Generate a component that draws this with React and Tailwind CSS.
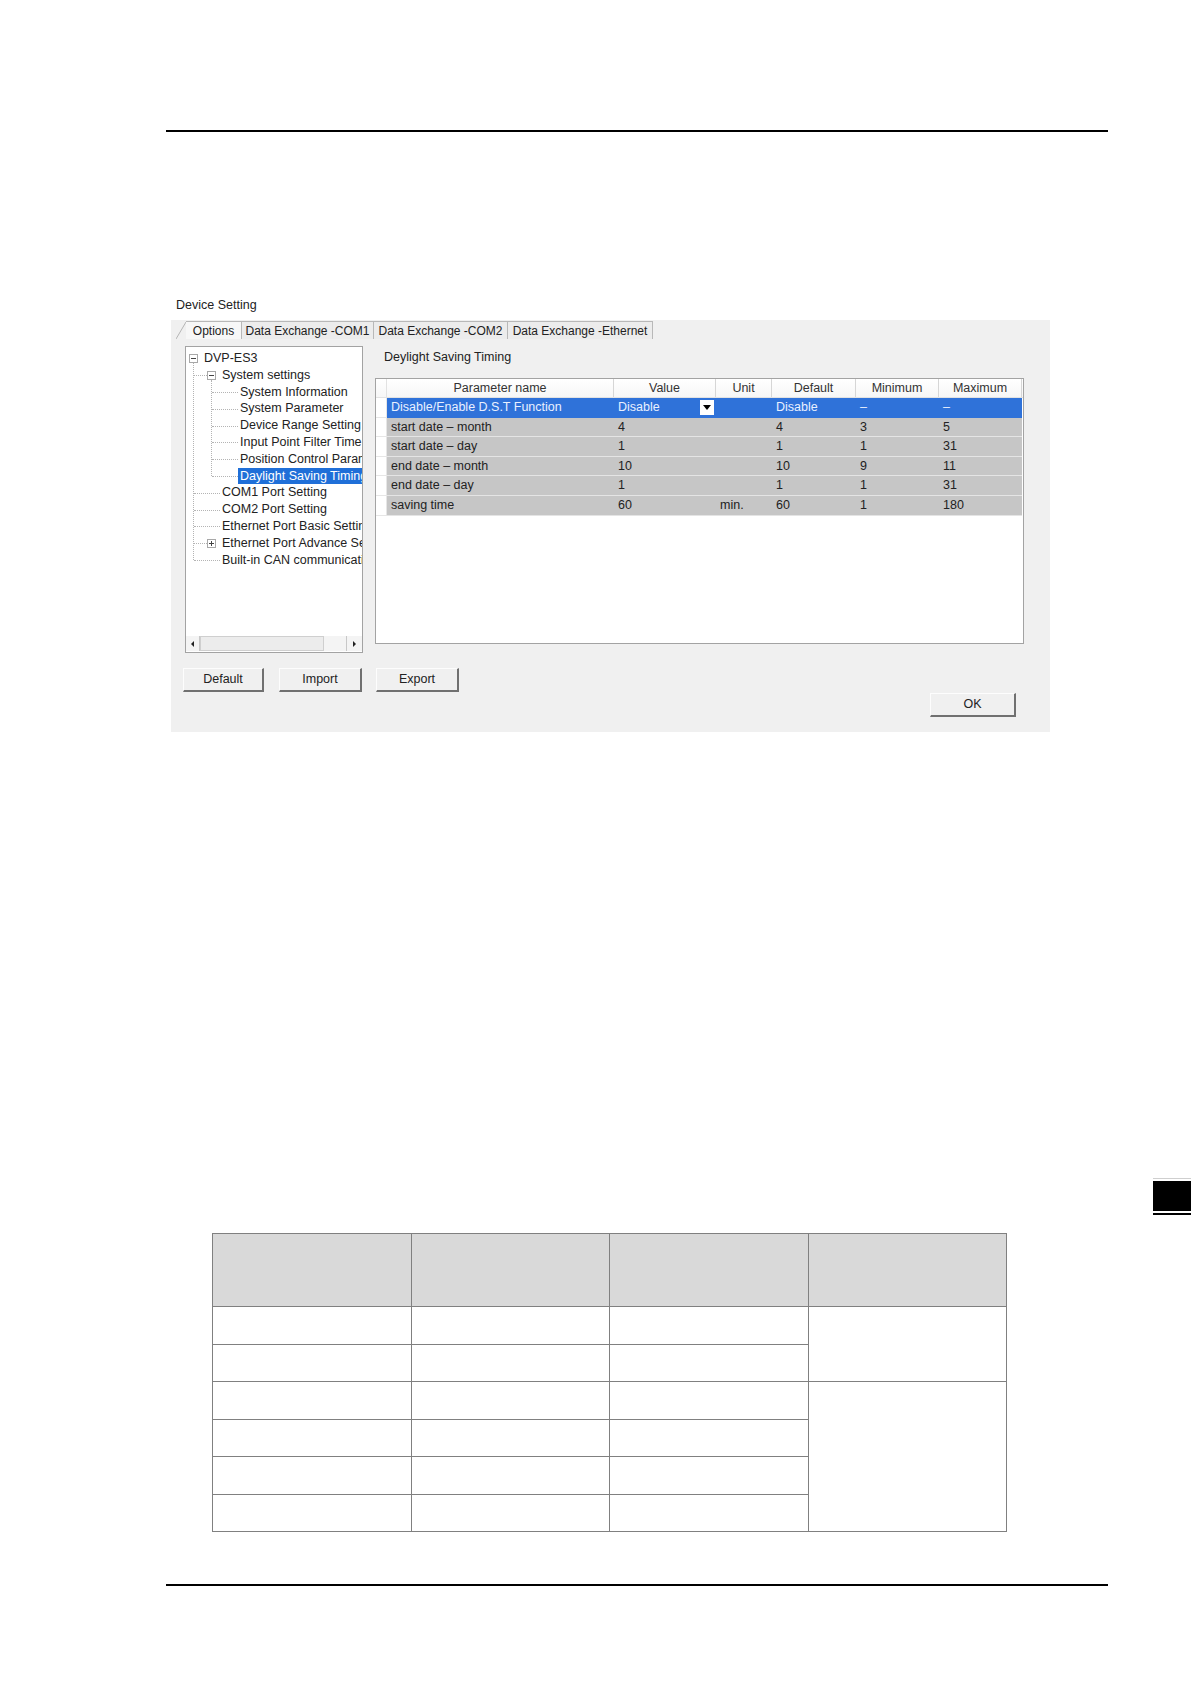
import React from "react";

const tabs = [
  { label: "Options", w: "w-[56px]", active: true },
  { label: "Data Exchange -COM1", w: "w-[132px]" },
  { label: "Data Exchange -COM2", w: "w-[134px]" },
  { label: "Data Exchange -Ethernet", w: "w-[145px]" },
];

const tree = [
  { t: "DVP-ES3", x: 18, box: "minus", bx: 3 },
  { t: "System settings", x: 36, box: "minus", bx: 21 },
  { t: "System Information", x: 54 },
  { t: "System Parameter", x: 54 },
  { t: "Device Range Setting", x: 54 },
  { t: "Input Point Filter Time", x: 54 },
  { t: "Position Control Parameter", x: 54 },
  { t: "Daylight Saving Timing", x: 54, sel: true },
  { t: "COM1 Port Setting", x: 36 },
  { t: "COM2 Port Setting", x: 36 },
  { t: "Ethernet Port Basic Setting", x: 36 },
  { t: "Ethernet Port Advance Setting", x: 36, box: "plus", bx: 21 },
  { t: "Built-in CAN communication", x: 36 },
];

const cols = [
  { h: "Parameter name", w: "w-[227px]" },
  { h: "Value", w: "w-[102px]" },
  { h: "Unit", w: "w-[56px]" },
  { h: "Default", w: "w-[84px]" },
  { h: "Minimum", w: "w-[83px]" },
  { h: "Maximum", w: "w-[83px]" },
];

const rows = [
  ["Disable/Enable D.S.T Function", "Disable", "", "Disable", "–", "–"],
  ["start date – month", "4", "", "4", "3", "5"],
  ["start date – day", "1", "", "1", "1", "31"],
  ["end date – month", "10", "", "10", "9", "11"],
  ["end date – day", "1", "", "1", "1", "31"],
  ["saving time", "60", "min.", "60", "1", "180"],
];

const ROW = 16.8;
const mid = (i) => 3 + i * ROW + ROW / 2;

function TreeBox({ kind }) {
  return (
    <span className="absolute top-[4px] w-[9px] h-[9px] border border-[#a8a8a8] bg-white flex items-center justify-center">
      <span className="block w-[5px] h-[1px] bg-[#444]" />
      {kind === "plus" && <span className="absolute block w-[1px] h-[5px] bg-[#444]" />}
    </span>
  );
}

function Button({ children, w }) {
  return (
    <div className={`${w} h-[24px] flex items-center justify-center border-t border-l border-[#fdfdfd] border-r-2 border-b-2 border-r-[#707070] border-b-[#707070] text-[12.5px] text-[#222]`}>
      {children}
    </div>
  );
}

function Tree() {
  const level1 = [1, 8, 9, 10, 11, 12];
  const level2 = [2, 3, 4, 5, 6, 7];
  const line = "border-dotted border-[#b4b4b4]";
  return (
    <div className="w-[178px] h-[307px] border border-[#a3a3a3] bg-white flex flex-col">
      <div className="relative flex-1 overflow-hidden pt-[3px]">
        <div
          className={`absolute left-[7px] w-0 border-l ${line}`}
          style={{ top: mid(0) + 5, height: mid(12) - mid(0) - 5 }}
        />
        <div
          className={`absolute left-[25px] w-0 border-l ${line}`}
          style={{ top: mid(1) + 5, height: mid(7) - mid(1) - 5 }}
        />
        {level1.map((i) => (
          <div
            key={"h1" + i}
            className={`absolute h-0 border-t ${line}`}
            style={{ top: mid(i), left: 8, width: tree[i].box ? 13 : 26 }}
          />
        ))}
        {level2.map((i) => (
          <div
            key={"h2" + i}
            className={`absolute left-[26px] w-[26px] h-0 border-t ${line}`}
            style={{ top: mid(i) }}
          />
        ))}
        {tree.map((it, i) => (
          <div key={i} className="relative h-[16.8px] whitespace-nowrap text-[12.5px] leading-[16.8px] text-[#222]">
            {it.box && (
              <span className="absolute" style={{ left: it.bx }}>
                <TreeBox kind={it.box} />
              </span>
            )}
            <span
              className={`absolute top-0 pl-[2px] pr-[20px] ${it.sel ? "bg-[#1f6fd8] text-white" : ""}`}
              style={{ left: it.x - 2 }}
            >
              {it.t}
            </span>
          </div>
        ))}
      </div>
      <div className="h-[15px] mb-[1px] flex items-stretch bg-[#f4f4f4]">
        <div className="w-[14px] flex items-center justify-center border-r border-[#c8c8c8]">
          <span className="block w-0 h-0 border-y-[3px] border-y-transparent border-r-[3px] border-r-[#222]" />
        </div>
        <div className="w-[124px] bg-[#ececec] border border-[#cfcfcf]" />
        <div className="flex-1" />
        <div className="w-[16px] flex items-center justify-center border-l border-[#c8c8c8]">
          <span className="block w-0 h-0 border-y-[3px] border-y-transparent border-l-[3px] border-l-[#222]" />
        </div>
      </div>
    </div>
  );
}

function Grid() {
  return (
    <div className="w-[649px] h-[266px] border border-[#a3a3a3] bg-white text-[12.5px]">
      <div className="flex h-[19px] border-b border-[#e2e2e2] text-[#333] bg-gradient-to-b from-white to-[#f6f6f6]">
        <div className="w-[11px] border-r border-[#e2e2e2]" />
        {cols.map((c) => (
          <div key={c.h} className={`${c.w} flex items-center justify-center border-r border-[#d6d6d6]`}>
            {c.h}
          </div>
        ))}
      </div>
      {rows.map((r, i) => {
        const sel = i === 0;
        return (
          <div key={i} className="flex h-[19.6px]">
            <div className="w-[11px] border-r border-b border-[#e6e6e6] bg-white" />
            {r.map((v, j) => (
              <div
                key={j}
                className={`${cols[j].w} relative flex items-center pl-[4px] border-b whitespace-nowrap ${
                  sel ? "bg-[#2f72d9] text-[#e9f0ff] border-[#2f72d9]" : "bg-[#c6c6c6] text-[#222] border-[#e4e4e4]"
                }`}
              >
                {v}
                {sel && j === 1 && (
                  <span className="absolute right-[2px] top-[2px] w-[14px] h-[15px] bg-white flex items-center justify-center">
                    <span className="block w-0 h-0 border-x-[4px] border-x-transparent border-t-[5px] border-t-black" />
                  </span>
                )}
              </div>
            ))}
          </div>
        );
      })}
    </div>
  );
}

function Dialog() {
  return (
    <div className="ml-[171px] mt-[7px] w-[879px] h-[412px] bg-[#f0f0f0] flex flex-col">
      <div className="mt-[1px] h-[18px] flex items-stretch pl-[5px] text-[12px] text-[#222]">
        <svg width="10" height="18" className="block">
          <line x1="0" y1="18" x2="10" y2="1" stroke="#b5b5b5" strokeWidth="1" />
        </svg>
        {tabs.map((t) => (
          <div
            key={t.label}
            className={`${t.w} flex items-center justify-center whitespace-nowrap border-t border-r border-[#b8b8b8] ${
              t.active ? "bg-[#f7f7f7]" : "bg-[#ececec]"
            }`}
          >
            {t.label}
          </div>
        ))}
      </div>
      <div className="flex pt-[7px]">
        <div className="ml-[14px]">
          <Tree />
        </div>
        <div className="ml-[12px] flex flex-col">
          <div className="h-[32px] pl-[9px] pt-[2px] text-[12.5px] text-[#222]">Deylight Saving Timing</div>
          <Grid />
        </div>
      </div>
      <div className="mt-[15px] ml-[12px] flex">
        <Button w="w-[81px]">Default</Button>
        <div className="ml-[15px]">
          <Button w="w-[83px]">Import</Button>
        </div>
        <div className="ml-[14px]">
          <Button w="w-[83px]">Export</Button>
        </div>
      </div>
      <div className="mt-[1px] self-end mr-[34px]">
        <Button w="w-[86px]">OK</Button>
      </div>
    </div>
  );
}

function DocTable() {
  const cell = "border-[1.5px] border-[#808080]";
  return (
    <table className="ml-[212px] mt-[18px] w-[795px] border-collapse table-fixed">
      <tbody>
        <tr className="h-[73px] bg-[#d9d9d9]">
          <td className={cell} />
          <td className={cell} />
          <td className={cell} />
          <td className={cell} />
        </tr>
        {[0, 1, 2, 3, 4, 5].map((i) => (
          <tr key={i} className="h-[37.5px]">
            <td className={cell} />
            <td className={cell} />
            <td className={cell} />
            {i === 0 && <td className={cell} rowSpan={2} />}
            {i === 2 && <td className={cell} rowSpan={4} />}
          </tr>
        ))}
      </tbody>
    </table>
  );
}

export default function App() {
  return (
    <div
      className="w-[1191px] h-[1684px] bg-white overflow-hidden flex flex-col"
      style={{ fontFamily: '"Liberation Sans", Arial, sans-serif' }}
    >
      <div className="mt-[130px] ml-[166px] w-[942px] h-[2px] bg-black" />
      <div className="mt-[166px] ml-[176px] h-[15px] text-[12.5px] leading-[15px] text-[#222]">Device Setting</div>
      <Dialog />
      <div className="mt-[446px] self-end w-[38px]">
        <div className="h-[1px] bg-[#cfcfcf]" />
        <div className="mt-[2px] h-[30px] bg-black" />
        <div className="mt-[2px] h-[2px] bg-black" />
      </div>
      <DocTable />
      <div className="mt-[52px] ml-[166px] w-[942px] h-[2px] bg-black" />
    </div>
  );
}
